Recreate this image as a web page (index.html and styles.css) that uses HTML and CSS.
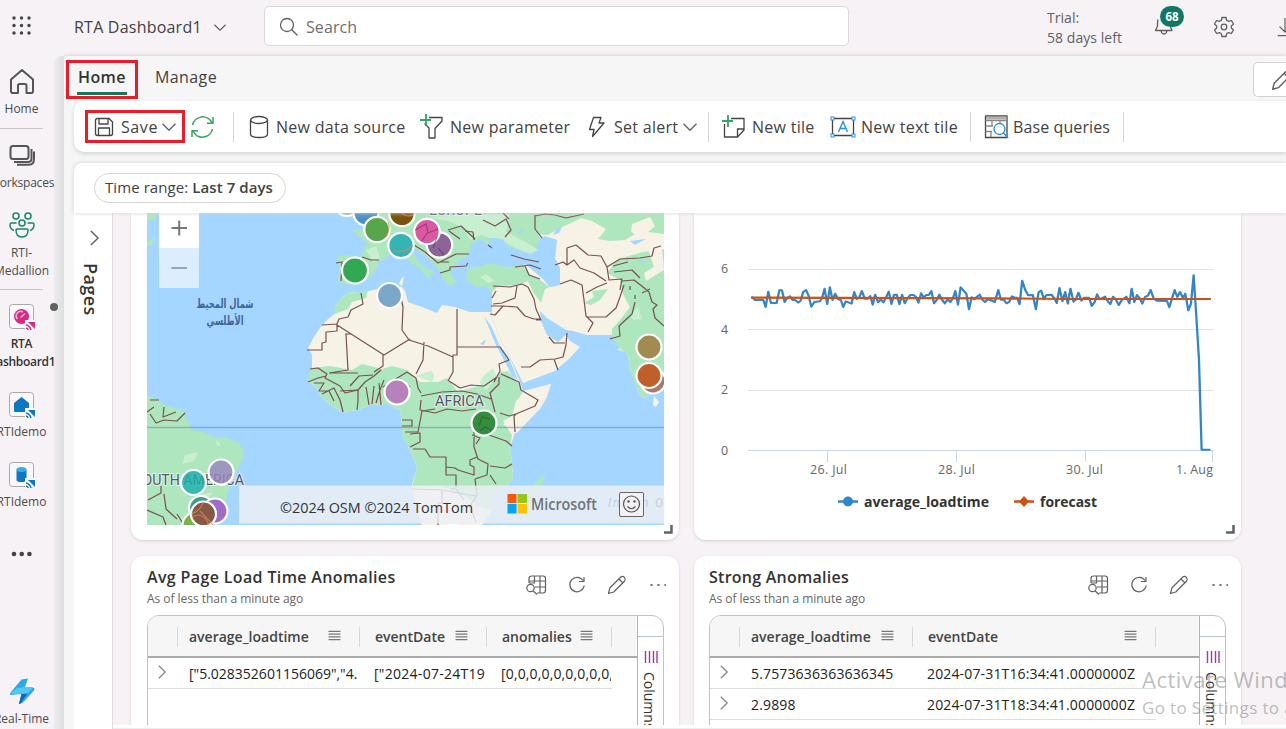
FILE: index.html
```html
<!DOCTYPE html>
<html lang="en">
<head>
<meta charset="utf-8">
<title>RTA Dashboard1</title>
<link rel="stylesheet" href="styles.css">
</head>
<body>
<svg class="defs" width="0" height="0">
  <defs>
    <symbol id="i-table" viewBox="0 0 22 22"><path d="M4 9V4.500Q4 2 6.500 2H18Q20.500 2 20.500 4.500V16Q20.500 19 18 19H12M4 7H20.500M10 13H20.500M9.500 2V9M15 2V19M4 9H10M20.500 8V13"/><circle cx="5.500" cy="14" r="3.700"/><path d="M8.200 17L12 20.500"/></symbol>
    <symbol id="i-refresh" viewBox="0 0 22 22"><path d="M17 6.500A7.200 7.200 0 1 0 18.200 11.500M18 3V7.500H13"/></symbol>
    <symbol id="i-pencil" viewBox="0 0 22 22"><path d="M2.500 19.500L3.800 14L14.800 3Q16.500 1.700 18.300 3.300Q20 5.200 18.700 7L7.700 18Z M13 5L17 9"/></symbol>
    <symbol id="i-menu" viewBox="0 0 14 12"><path d="M0.500 1.500H13.500M0.500 4.500H13.500M0.500 7.500H13.500M0.500 10.500H13.500"/></symbol>
    <symbol id="i-chev" viewBox="0 0 14 8"><path d="M0.500 0.800L7 7.200L13.500 0.800"/></symbol>
    <symbol id="i-chevr" viewBox="0 0 8 14"><path d="M0.800 0.800L7.200 7L0.800 13.200"/></symbol>
    <symbol id="i-corner" viewBox="0 0 9 9"><path d="M7.500 0V7.500H0"/></symbol>
  </defs>
</svg>
<header class="top">
  <svg class="waffle" viewBox="0 0 20 20"><g fill="#444"><circle cx="2" cy="2" r="1.700"/><circle cx="9.500" cy="2" r="1.700"/><circle cx="17" cy="2" r="1.700"/><circle cx="2" cy="9.500" r="1.700"/><circle cx="9.500" cy="9.500" r="1.700"/><circle cx="17" cy="9.500" r="1.700"/><circle cx="2" cy="17" r="1.700"/><circle cx="9.500" cy="17" r="1.700"/><circle cx="17" cy="17" r="1.700"/></g></svg>
  <span class="app-name">RTA Dashboard1</span>
  <svg class="line app-chev"><use href="#i-chev"/></svg>
  <div class="search"><svg class="line" width="20" height="20"><circle cx="8" cy="8" r="6.500"/><path d="M12.800 12.800L18.500 18.500"/></svg><span>Search</span></div>
  <div class="trial">Trial:<br>58 days left</div>
  <div class="bell"><svg class="line" width="20" height="22"><path d="M4 4.500Q3.500 6 3.500 11L1.500 15.500H18L16.500 12M7 15.500Q7.500 19 10 19Q12.500 19 13 15.500"/></svg><span class="badge">68</span></div>
  <svg class="line gear" viewBox="0 0 22 22"><circle cx="11" cy="11" r="2.800"/><path d="M9 1.500H13L13.700 4.500L15.500 5.400L18.400 4.500L20.500 8L18.300 10V12L20.500 14L18.400 17.500L15.500 16.600L13.700 17.500L13 20.500H9L8.300 17.500L6.500 16.600L3.600 17.500L1.500 14L3.700 12V10L1.500 8L3.600 4.500L6.500 5.400L8.300 4.500Z"/></svg>
  <svg class="line down" viewBox="0 0 18 22"><path d="M9 1V16M3 10.500L9 16.500L15 10.500M1 20.500H17"/></svg>
</header>
<div class="shell">
  <nav class="rail">
    <div class="rail-items">
      <div class="ri home"><svg class="bold-line" width="28" height="28"><path d="M3 24V12.500L14 3L25 12.500V24Q25 26 23.500 26H18.500V18.500Q18.500 17 17 17H11.500Q10 17 10 18.500V26H4.500Q3 26 3 24Z"/></svg><span>Home</span></div>
      <div class="ri ws"><svg class="bold-line" width="28" height="28"><rect x="2.500" y="5" width="18" height="13" rx="2.500"/><path d="M6 21H20Q23.500 21 23.500 17.500V8M9 23.700H21Q26 23.700 26 18V10.500"/></svg><span>Workspaces</span></div>
      <div class="ri med"><svg class="green-line" width="28" height="28"><circle cx="8" cy="5" r="3"/><circle cx="20" cy="5" r="3"/><circle cx="14" cy="12" r="3"/><path d="M8 19Q8 18 9 18H19Q20 18 20 19Q20 26 14 26Q8 26 8 19ZM8.500 12H3Q2 12 2 14Q2 18 6 19.500M19.500 12H25Q26 12 26 14Q26 18 22 19.500"/></svg><span>RTI-</span><span>Medallion</span></div>
      <div class="ri dash"><i class="unsaved"></i><svg width="28" height="27"><rect class="tile-box" x="1.500" y=".5" width="24" height="24" rx="3"/><circle cx="13.500" cy="12.500" r="7.500" fill="#d52b85"/><path d="M9.500 15A4.500 4.500 0 0 1 15 8M12.500 13.500L17 9.500" stroke="#f7b5d8" stroke-width="1.500" fill="none"/><path d="M17 16H28V27H17Z" fill="#faf5f9"/><path d="M20 18H27V25Z" fill="#d52b85"/><path d="M18 21Q22 22 23 26M18 24Q20 24.500 20 26" stroke="#d52b85" stroke-width="1.500" fill="none"/></svg><span>RTA</span><span>Dashboard1</span></div>
      <div class="ri demo"><svg width="28" height="27"><rect class="tile-box" x="1.500" y=".5" width="24" height="24" rx="3"/><path d="M13.500 5L21 11V19Q21 20 20 20H7Q6 20 6 19V11Z" fill="#0c78c4"/><path d="M17 16H28V27H17Z" fill="#faf5f9"/><path d="M20 18H27V25Z" fill="#0c78c4"/><path d="M18 21Q22 22 23 26M18 24Q20 24.500 20 26" stroke="#0c78c4" stroke-width="1.500" fill="none"/></svg><span>RTIdemo</span></div>
      <div class="ri demo2"><svg width="28" height="27"><rect class="tile-box" x="1.500" y=".5" width="24" height="24" rx="3"/><path d="M8.500 7.500V18Q8.500 20 13.500 20Q18.500 20 18.500 18V7.500Z" fill="#0c78c4"/><ellipse cx="13.500" cy="7.500" rx="5" ry="2.500" fill="#38aee8"/><path d="M17 16H28V27H17Z" fill="#faf5f9"/><path d="M20 18H27V25Z" fill="#0c78c4"/><path d="M18 21Q22 22 23 26M18 24Q20 24.500 20 26" stroke="#0c78c4" stroke-width="1.500" fill="none"/></svg><span>RTIdemo</span></div>
      <svg class="more" width="22" height="6"><g fill="#444"><circle cx="3" cy="3" r="2.300"/><circle cx="10.700" cy="3" r="2.300"/><circle cx="18.400" cy="3" r="2.300"/></g></svg>
      <div class="ri rt"><svg width="28" height="28"><path d="M13.500 1.500L20 .5L17 9L26 10Q27 11 26 12.500L14.500 25L11 26L13.500 16L2 17Q1.500 16 3 14Z" fill="#2ba9e4"/><path d="M17 9H25.500L20 15L7 16L2 15.500L9 10Z" fill="#53c6f2"/><path d="M13.500 16H19L12 26L11 25.500Z" fill="#0f68bb"/></svg><span>Real-Time</span></div>
    </div>
    <div class="rail-shadow"></div>
  </nav>
  <main class="main">
    <div class="tabs">
      <div class="tab active">Home<i class="mark mark-home"></i></div>
      <div class="tab manage">Manage</div>
      <div class="edit"><svg class="line"><use href="#i-pencil"/></svg></div>
    </div>
    <div class="toolbar">
      <div class="tool save"><i class="mark mark-save"></i><svg class="dark" width="20" height="20"><path d="M1.500 3.500Q1.500 1.500 3.500 1.500H15L18.500 5V16.500Q18.500 18.500 16.500 18.500H3.500Q1.500 18.500 1.500 16.500ZM5 1.500V7H14V1.500M4.500 18.500V11H15.500V18.500"/></svg><span>Save</span><svg class="line chev"><use href="#i-chev"/></svg></div>
      <svg class="sync" viewBox="0 0 24 24"><path d="M2 10A10.300 10.300 0 0 1 21.500 8M22 14A10.300 10.300 0 0 1 2.500 16M22.500 2V8.300H16.500M1.500 22V15.700H7.500"/></svg>
      <i class="sep s1"></i>
      <div class="tool ds"><svg class="dark" width="20" height="24"><ellipse cx="10" cy="5" rx="8.500" ry="3.500"/><path d="M1.500 5V19Q1.500 22.500 10 22.500Q18.500 22.500 18.500 19V5"/></svg><span>New data source</span></div>
      <div class="tool param"><svg class="dark" width="24" height="26"><path d="M9 3.500H22V7L15 14.500V24H9V14L4.500 9.500"/><path class="plus" d="M6 0V12M0 6H11"/></svg><span>New parameter</span></div>
      <div class="tool alert"><svg class="dark" width="18" height="22"><path d="M5.500 1.500H13L11 7H16L4.500 20.500L6 13.500H1.500Z"/></svg><span>Set alert</span><svg class="line chev"><use href="#i-chev"/></svg></div>
      <i class="sep s2"></i>
      <div class="tool tile"><svg class="dark" width="24" height="24"><path d="M9 3.500H22V15L15.500 22H2.500V9M22 14H15.500V22"/><path class="plus" d="M6 0V12M0 6H11"/></svg><span>New tile</span></div>
      <div class="tool ttile"><svg width="26" height="22"><path class="frame" d="M2.500 2.500H23.500V19.500H2.500Z"/><g fill="#fff" stroke="#2994d5"><rect x="1" y="1" width="3" height="3"/><rect x="22" y="1" width="3" height="3"/><rect x="1" y="18" width="3" height="3"/><rect x="22" y="18" width="3" height="3"/><path fill="none" stroke-width="1.400" d="M8.500 16L13 5.500L17.500 16M10 12.500H16"/></g></svg><span>New text tile</span></div>
      <i class="sep s3"></i>
      <div class="tool base"><svg class="dark" width="26" height="26"><path d="M1.500 2H23V23.500H1.500Z"/><path d="M2 4H22.500" stroke="#b5adad" stroke-width="3"/><path d="M1.500 6.500H23M1.500 12H9M1.500 17.500H8M8 6.500V12M16 6.500V9M7 18V23" stroke="#888"/><circle cx="15.500" cy="15" r="5.500" fill="#fff" stroke="#2994d5"/><path d="M19.500 19L24 24" stroke="#2994d5" stroke-width="1.500"/></svg><span>Base queries</span></div>
      <i class="sep s4"></i>
    </div>
    <div class="filter"><div class="pill">Time range: <b>Last 7 days</b></div></div>
    <div class="work">
      <aside class="pages"><svg class="line"><use href="#i-chevr"/></svg><span>Pages</span></aside>
      <div class="canvas">
        <div class="cards">
          <section class="card map-card">
            <svg class="map" viewBox="147 213 517 312">
              <rect x="147" y="213" width="517" height="312" fill="#a5d6ff"/>
              <g fill="#aee7bd">
                <path d="M147 213H158L155 219L147 221ZM147 243L152 239L155 237L152 246L147 246Z"/>
                <path d="M147 393L150 397L157 399L166 406L183 410L188 423L193 430L203 432L214 437L227 438L238 443L243 449L244 456L237 470L231 481L228 493L223 510L220 525H147Z"/>
                <path fill="#f6f2e6" d="M348 292L360 293L373 290L389 287L402 287L405 291L408 302L422 307L437 313L442 305L455 307L470 312L482 312L491 312L492 318L500 338L510 358L520 382L523 391L535 388L551 384L547 397L540 409L528 421L515 433L510 447L512 463L513 480L505 487L495 492L492 510L482 525H422L416 505L412 485L417 467L410 450L402 435L402 423L400 410L387 404L370 405L357 410L342 412L329 404L320 395L317 388L308 382L310 373L312 368L312 355L308 348L314 337L320 328L328 319L337 312L335 307L342 298Z"/>
                <path d="M348 292L360 293L368 290L366 298L352 302L348 309L335 314L334 308L342 298ZM310 368L330 366L352 370L362 364L382 369L392 366L407 370L420 382L438 382L447 378L458 392L478 386L493 380L500 372L508 371L518 383L523 394L516 401L512 416L503 421L512 435L510 447L512 463L513 480L505 487L495 492L492 510L478 506L462 494L440 486L412 488L417 467L410 450L402 435L402 423L400 410L387 404L370 405L357 410L342 412L329 404L320 395L317 388L308 382Z"/>
                <path fill="#f6f2e6" d="M492 286L525 264L542 278L550 287L560 285L555 260L557 240L545 236L530 240L536 213H664V375L656 390L645 398L640 395L633 377L630 370L628 355L613 335H587L573 331L566 330L547 318L540 311L541 321L547 335L558 342L566 335L570 341L580 347L570 358L555 371L523 383L518 373L500 338L492 318Z"/>
                <path d="M353 230L360 230L367 222L361 213H545L537 230L540 240L536 248L531 254L509 247L502 240L490 237L488 245L481 239L472 244L468 255L459 261L450 272L456 282L450 286L443 279L438 269L430 260L417 249L412 249L416 259L425 268L436 272L430 274L431 281L420 269L407 259L401 254L390 255L378 262L378 268L369 278L356 285L344 284L338 280L340 266L336 257L345 255L361 257L367 243Z"/>
                <path d="M467 269L480 266L490 263L507 267L523 265L528 273L540 280L550 287L545 289L541 303L533 292L528 281L518 285L498 286L492 292L485 286L477 288L466 279ZM545 213H664V234L640 231L625 240L610 241L598 239L606 229L592 221L581 218L573 222L558 229L548 235L535 234ZM584 303L594 297L592 291L608 289L600 300L591 305ZM620 280L607 273L618 259L643 252L664 249V375L656 390L645 398L640 395L633 377L630 370L628 355L618 346L612 336L612 329L620 320L630 307L623 294Z"/>
              </g>
              <g fill="#c9efd1"><path d="M430 217L467 214L510 214L506 232L526 242L538 250L530 254L510 245L499 238L490 238L481 235L470 240L463 228L451 222ZM480 277L486 274L495 281L488 283ZM630 315L638 307L642 319L633 320ZM620 347L624 352L617 350ZM366 250L376 246L380 258L374 263ZM185 455L198 452L194 461L182 464ZM217 440L221 446L216 445ZM203 494L213 492L205 503L195 510ZM416 376L438 368L432 382ZM478 380L493 368L497 377L486 391Z"/></g>
              <g fill="#f6f2e6"><path d="M438 382L447 377L460 392L468 380L478 386L486 370L480 367H430ZM522 393L551 384L543 403L530 419L517 433L512 432L513 427L503 425L514 415L517 402ZM402 278L404 276L402 287L399 283ZM654 396L659 402L656 407L653 405Z"/><path d="M412 487L425 488L462 499L476 510L489 509L482 525H422L417 510Z"/><path d="M650 217L655 226L648 232L661 236L664 270L646 281L644 273L654 267L648 249L631 231L632 224Z"/></g>
              <g fill="#a5d6ff"><path d="M537 243L547 237L557 240L550 248L554 256L560 268L560 285L550 287L542 277L541 262ZM468 255L472 244L480 239L487 245L495 244L503 239L510 252L522 259L523 265L507 267L490 262L475 267L467 264ZM553 235L557 228L562 227L559 233ZM517 233L525 228L519 235ZM484 316L491 326L500 346L508 356L518 380L512 376L505 362L496 345Z"/><path d="M484 415L493 413L493 420L486 423ZM630 241L646 239L635 245ZM640 260L648 262L639 263ZM480 344L486 339L484 345Z"/></g>
              <path fill="#aee7bd" d="M546 473L542 485L534 500L531 517L526 516L525 502L534 484Z"/>
              <g class="borders">
                <path d="M337 324L322 325M361 293L363 304L351 310L348 317L339 319L337 324L337 331L326 332L326 342L322 343L322 350L307 350M337 325L384 355L410 339M383 355L383 366L374 372M346 334L348 370L329 373M345 334H350M310 369L318 368L327 374L325 378L340 386L345 393L358 390L365 382L374 376L381 370M329 373H358M400 293L403 307L402 330L409 340M409 340L428 346L453 357M424 342L423 360L416 374M457 309V355H453V372L448 381M457 347H500L509 360L499 364L500 371L494 382M449 381L460 388L471 385L484 386L497 377"/>
                <path d="M326 376L318 378L308 382M314 383H324L319 391L329 391L334 401M322 394L334 388L340 400L343 412M340 391L358 390L358 401L357 410M350 386L359 376L373 375M366 387L369 405M374 386L372 404M379 383L381 405M384 380L380 390L376 403M383 387L407 372L416 378L418 388L421 393M400 379L410 387M402 420H412V426H402M405 432H418L422 411L435 409M410 434L420 433V442L410 447M413 449H425L430 457H446V467L455 468L458 470L474 475V467L470 465V460L477 457M421 400L420 410L435 413L447 409L462 411L476 409M421 396L442 392L462 391L477 394L491 399M499 377L499 384L490 393L495 412M501 374L519 382L521 390L538 400L535 406L516 414L514 416L515 432M500 413L509 416L516 414M474 432V447L478 459L488 464L487 475L475 479M486 434L506 441L512 446M490 466L505 468L512 464M490 475L496 484M446 467V475H456V488L450 489M412 489L443 490L458 493L476 496M442 491V503H438V525M475 479L477 495L470 506L476 522M456 489L464 500M472 435L480 438L476 444"/>
                <path d="M147 412L154 407M150 414L156 423L164 420L177 421L185 413M164 407L163 417L176 412M150 400H159M161 486V493L148 500M164 494L166 509L177 519M147 510L163 517L166 525M177 514L184 525M336 263L342 262L341 281M362 257L371 260L379 260M411 243L425 252L438 263L456 254L469 254M440 273L450 270V267L466 266L468 263M440 262H449M448 230L461 226L475 239M483 220L495 226L506 219L511 230L505 237M503 213L509 219M535 216L545 214L555 215L566 218L575 216L584 214M535 215V229L542 238"/>
                <path d="M449 231L460 239M465 231L473 232L474 240M488 245L492 248M511 255L524 259L539 262M515 267L530 265L541 269M525 266L529 275L540 279M493 286L510 287L522 284L528 287L534 299L536 309L541 320H536M517 286L515 298L502 303L493 304M492 298L496 291M491 306L503 306L495 315L490 314M503 306L517 307L525 316L534 319L541 319M521 367H530L540 360L555 359L563 357L566 345L567 333M554 359L558 370M549 337L554 343L565 343M555 265L563 262L567 265V248L576 245L588 255L601 256L607 267M567 265L574 260L580 268L594 273L606 281M560 284L571 280L582 285L584 300L586 316L593 323L588 332M571 319M586 317H606L616 308L620 297L624 285M607 267L609 280L622 279L620 290M607 267L620 259L640 258L652 256L654 248L661 246M613 266L628 262M614 272L632 270L640 278M622 281L634 280L643 287L649 292L652 302L657 305L653 309L655 318L664 326M586 293L597 287L607 283M635 302L632 314L619 326L620 336L610 339M630 286V290M635 295V299M642 293L650 289"/>
              </g>
              <path d="M147 427.500H664" stroke="#6b83c9" stroke-opacity=".55" stroke-width="1.500"/>
              <g class="map-label"><text x="429" y="215" textLength="53" lengthAdjust="spacingAndGlyphs">EUROPE</text><text x="435" y="406" textLength="49" lengthAdjust="spacingAndGlyphs">AFRICA</text><text x="134" y="485" textLength="110" lengthAdjust="spacingAndGlyphs">SOUTH AMERICA</text></g>
              <g class="arabic"><text x="225" y="308" textLength="57" lengthAdjust="spacingAndGlyphs">شمال المحيط</text><text x="225" y="325" textLength="37" lengthAdjust="spacingAndGlyphs">الأطلسي</text></g>
              <g class="pins">
                <circle cx="347" cy="204" r="12" fill="#aebd7b"/><circle cx="366" cy="213" r="12.500" fill="#4b91c8"/><circle cx="377" cy="229.500" r="12.700" fill="#58a64c"/><circle cx="402" cy="213.500" r="12.700" fill="#79530d"/><circle cx="401" cy="245.500" r="12.700" fill="#35b4b5"/><circle cx="439.500" cy="245" r="12.700" fill="#8c6498"/><circle cx="427" cy="231.500" r="12.700" fill="#dc56a2"/>
                <circle cx="355" cy="270.500" r="13" fill="#32a852"/><circle cx="389.500" cy="295.500" r="12.500" fill="#7ba7c9"/><circle cx="397" cy="392" r="12.500" fill="#b682bb"/><circle cx="484" cy="423" r="12.500" fill="#318e3c"/><circle cx="649" cy="347" r="12.500" fill="#a18b51"/><circle cx="653" cy="381" r="12.500" fill="#aa7768"/><circle cx="649" cy="375.500" r="12.500" fill="#bf602b"/>
                <circle class="glass" cx="221" cy="472" r="12.500" fill="#9785bd"/><circle class="glass" cx="193.500" cy="482.500" r="12.500" fill="#1cb0ad"/><circle cx="201" cy="508" r="12" fill="#419c89"/><circle cx="215" cy="511" r="12.500" fill="#a06cc8"/><circle cx="195" cy="525" r="12.500" fill="#79b34c"/><circle cx="203.500" cy="514" r="12.500" fill="#865846"/><circle cx="453" cy="537" r="12.500" fill="#d02b85"/>
              </g>
              <g class="pin-detail"><path d="M415 230L426 224L428 233L438 229M427 233L422 241M433 248L437 237M438 248L444 255M479 426L482 417L490 419M480 431L485 427L491 430"/><path class="rings" d="M203 503Q199 512 191 514M200 511L214 526M192 517Q203 511 209 525M394 204Q405 221 414 214M386 237Q391 229 388 222M392 250Q404 254 412 246"/></g>
              <rect x="159" y="213" width="40" height="35" fill="#fff"/><rect x="159" y="248" width="40" height="40" fill="#dcedfe"/>
              <path d="M171.500 228H187M179.200 220.500V235.500" stroke="#777" stroke-width="2"/><path d="M171.500 268H187" stroke="#8fa9bf" stroke-width="2"/>
              <rect x="239" y="485.500" width="425" height="38" fill="#ecf0f5" fill-opacity=".84"/>
              <text x="608" y="507" class="ocean" textLength="55">Indian O</text>
              <text class="copy" x="280" y="512.500" textLength="193" lengthAdjust="spacingAndGlyphs">©2024 OSM ©2024 TomTom</text>
              <path fill="#f25b0a" d="M507.500 494H516.500V503H507.500Z"/><path fill="#94c718" d="M517.500 494H527V503H517.500Z"/><path fill="#05a3f0" d="M507.500 504H516.500V513.500H507.500Z"/><path fill="#ffc20b" d="M517.500 504H527V513.500H517.500Z"/>
              <text class="msft" x="531" y="510" textLength="66" lengthAdjust="spacingAndGlyphs">Microsoft</text>
              <rect x="619.500" y="492.500" width="24" height="24" rx="1.500" fill="#f4f0f5" stroke="#666"/><g fill="none" stroke="#555" stroke-width="1.200"><circle cx="631.500" cy="504" r="8"/><path d="M627.500 506.500Q631.500 511 635.500 506.500"/></g><circle cx="628.500" cy="501.500" r="1.200" fill="#555"/><circle cx="634.500" cy="501.500" r="1.200" fill="#555"/>
            </svg>
            <svg class="corner"><use href="#i-corner"/></svg>
          </section>
          <section class="card">
            <svg class="chart" viewBox="694 213 547 327">
              <path d="M748 269.500H1214M748 329.500H1214M748 390.500H1214" stroke="#e3e3e3"/>
              <path d="M748 450.500H1214M827.500 450V462M956.500 450V462M1085.500 450V462M1212.500 450V462" fill="none" stroke="#ccd6eb"/>
              <g transform="translate(690 210) scale(.3801 .3333)" fill="none" stroke-linejoin="round" stroke-linecap="round">
                <path stroke="#2f86ca" stroke-width="6" d="M164 262L171 270H193L199 291L206 245L213 279H228L235 241H242L249 276L256 264L263 259L270 270H277L285 278L291 272L298 246L305 240L312 257L319 290L327 276L342 274L348 262L354 236L361 282L368 232L375 270L382 251L390 268L397 270L403 291L410 274L425 281L432 246L439 267L445 263L452 243L460 266H468L474 258L481 284L487 254L495 277L502 268L509 277L517 259L523 245L530 282L537 254H544L551 283L558 254L565 280L572 265L580 255H588L594 260L601 278L608 250L615 263L621 255H628L635 243L642 280L649 270L656 254L663 269L670 280L678 268L685 276L692 264L698 243L705 284L712 232L727 251L734 298L741 262L748 268L755 260L762 254L769 269L776 276L784 267L802 276L811 240L818 269H825L833 280L840 276L847 259L854 263H861L867 283L874 212L882 240L890 256L902 255L910 298L917 247L924 242L931 266L938 255L951 254L959 266L965 279L972 234L980 274L987 246L994 281L1001 236L1009 275L1015 269L1022 248L1030 272L1037 263L1050 263L1057 288L1065 275L1071 253L1078 268L1092 260L1100 275L1106 282L1113 260L1120 268L1128 285L1136 270L1148 260L1156 280L1162 236L1169 276L1176 255L1183 265L1190 281L1197 261L1205 257L1212 240L1220 266L1228 272L1255 273L1261 292L1275 240L1282 261L1289 246L1297 264L1303 251L1311 301L1318 281L1325 196L1331 300L1339 447L1346 719H1367"/>
                <path stroke="#cf5012" stroke-width="6.500" stroke-linecap="square" d="M164 263L790 265L1000 267H1367"/>
              </g>
              <g class="axis"><text x="721" y="273">6</text><text x="721" y="334">4</text><text x="721" y="394">2</text><text x="721" y="455">0</text><text x="810" y="474" textLength="37">26. Jul</text><text x="938" y="474" textLength="37">28. Jul</text><text x="1066" y="474" textLength="37">30. Jul</text><text x="1176" y="474" textLength="37">1. Aug</text></g>
              <path d="M838 501.500H858" stroke="#2f86ca" stroke-width="2.500"/><circle cx="848" cy="501.500" r="5" fill="#2f86ca"/>
              <path d="M1014 501.500H1034" stroke="#cf5012" stroke-width="2.500"/><path d="M1024 496L1029 501.500L1024 507L1019 501.500Z" fill="#cf5012"/>
              <g class="legend"><text x="864" y="506.500" textLength="125" lengthAdjust="spacingAndGlyphs">average_loadtime</text><text x="1040" y="506.500" textLength="57" lengthAdjust="spacingAndGlyphs">forecast</text></g>
            </svg>
            <svg class="corner"><use href="#i-corner"/></svg>
          </section>
          <section class="card table-card">
            <div class="card-head"><div><h2>Avg Page Load Time Anomalies</h2><p>As of less than a minute ago</p></div>
              <div class="actions"><svg><use href="#i-table"/></svg><svg><use href="#i-refresh"/></svg><svg><use href="#i-pencil"/></svg><span class="dots"></span></div></div>
            <div class="grid g1">
              <div class="rows">
                <div class="row head"><span></span><span class="c c1">average_loadtime<svg><use href="#i-menu"/></svg></span><span class="c c2">eventDate<svg><use href="#i-menu"/></svg></span><span class="c c3">anomalies<svg><use href="#i-menu"/></svg></span><span class="c"></span></div>
                <div class="row"><span class="ex"><svg class="line"><use href="#i-chevr"/></svg></span><span class="c d1">["5.028352601156069","4.</span><span class="c d2">["2024-07-24T19</span><span class="c d3">[0,0,0,0,0,0,0,0,0,0,0</span></div>
              </div>
              <div class="cols"><svg width="14" height="12"><path d="M1.500 0V12M5.500 0V12M9.500 0V12M13 0V12" stroke="#9b3d9a" stroke-width="1.400"/></svg><span>Columns</span></div>
            </div>
          </section>
          <section class="card table-card second">
            <div class="card-head"><div><h2>Strong Anomalies</h2><p>As of less than a minute ago</p></div>
              <div class="actions"><svg><use href="#i-table"/></svg><svg><use href="#i-refresh"/></svg><svg><use href="#i-pencil"/></svg><span class="dots"></span></div></div>
            <div class="grid g2">
              <div class="rows">
                <div class="row head"><span></span><span class="c c1">average_loadtime<svg><use href="#i-menu"/></svg></span><span class="c c2">eventDate<svg><use href="#i-menu"/></svg></span><span class="c"></span></div>
                <div class="row"><span class="ex"><svg class="line"><use href="#i-chevr"/></svg></span><span class="c">5.7573636363636345</span><span class="c date">2024-07-31T16:34:41.0000000Z</span></div>
                <div class="row"><span class="ex"><svg class="line"><use href="#i-chevr"/></svg></span><span class="c">2.9898</span><span class="c date">2024-07-31T18:34:41.0000000Z</span></div>
              </div>
              <div class="cols"><svg width="14" height="12"><path d="M1.500 0V12M5.500 0V12M9.500 0V12M13 0V12" stroke="#9b3d9a" stroke-width="1.400"/></svg><span>Columns</span></div>
            </div>
          </section>
        </div>
        <div class="strip"></div>
      </div>
    </div>
  </main>
</div>
<div class="watermark"><div>Activate Windows</div><p>Go to Settings to activate Windows.</p></div>
</body>
</html>
```

FILE: styles.css
```css
* { box-sizing: border-box; }
body { margin: 0; width: 1286px; height: 729px; overflow: hidden; position: relative; background: #f7f2f6; font-family: "Open Sans", "Noto Sans", sans-serif; color: #424242; font-size: 16px; }
svg { flex: none; display: block; }
.defs { position: absolute; }
.line, .dark, .bold-line, .green-line, .sync, .actions svg { fill: none; stroke: #616161; stroke-width: 1.3; stroke-linejoin: round; }
.dark { stroke: #444; }
.bold-line { stroke: #555; stroke-width: 2; }
.green-line { stroke: #188568; stroke-width: 1.5; }

.top { height: 52px; display: flex; align-items: center; overflow: hidden; white-space: nowrap; }
.top > * { flex: none; }
.waffle { width: 20px; height: 20px; margin-left: 12px; }
.app-name { margin-left: 42px; width: 127px; letter-spacing: .22px; margin-top: 1px; }
.app-chev { width: 12px; height: 7px; margin: 2px 0 0 13px; }
.search { margin-left: 38px; width: 585px; height: 40px; border: 1px solid #dcd8dc; border-radius: 5px; background: #fff; display: flex; align-items: center; padding: 2px 0 0 14px; gap: 7px; color: #707070; letter-spacing: .1px; }
.trial { margin-left: 198px; margin-top: 4px; width: 90px; font-size: 14px; line-height: 20px; color: #616161; letter-spacing: .05px; }
.bell { margin-left: 17px; position: relative; }
.badge { position: absolute; left: 6px; top: -9px; width: 24px; height: 21px; border-radius: 11px; background: #117865; color: #fff; font-size: 11.500px; font-weight: 700; line-height: 21px; text-align: center; }
.gear { width: 22px; height: 22px; margin: 1px 0 0 39px; }
.down { width: 18px; height: 20px; margin: 1px 0 0 41px; }

.shell { display: flex; height: 677px; }
.rail { width: 64px; flex: none; display: flex; overflow: hidden; }
.rail-items { width: 43px; display: flex; flex-direction: column; align-items: center; }
.rail-shadow { width: 10px; margin: 4px 0 0 11px; border-radius: 8px 0 0; background: linear-gradient(90deg, #ededef, #dededf); }
.ri { width: 43px; display: flex; flex-direction: column; align-items: center; font-size: 12px; line-height: 18px; position: relative; flex: none; white-space: nowrap; color: #4b4b4b; }
.home { height: 77px; padding-top: 15px; gap: 5px; border-bottom: 1px solid #c9c5c9; }
.ws { height: 82px; padding-top: 12px; gap: 5px; letter-spacing: -.2px; }
.med { height: 79px; border-bottom: 1px solid #c9c5c9; }
.med svg { margin-bottom: 5px; }
.dash { padding-top: 14px; height: 102px; font-weight: 600; color: #333; letter-spacing: -.3px; }
.dash svg { margin-bottom: 4px; }
.tile-box { fill: #faf8fa; stroke: #a9a9a9; }
.unsaved { position: absolute; left: 50px; top: 13px; width: 8px; height: 8px; border-radius: 50%; background: #616161; }
.demo, .demo2 { gap: 4px; height: 70px; }
.more { margin-top: 19px; flex: none; }
.rt { margin-top: 121px; gap: 4px; }

.main { flex: 1; min-width: 0; margin-top: 4px; background: #f6f6f6; box-shadow: 0 -1px 3px #d8d4d8; clip-path: inset(-4px 0 0 0); }
.tabs { height: 45px; display: flex; white-space: nowrap; }
.tab { position: relative; height: 39px; line-height: 43px; }
.active { margin-left: 13px; width: 50px; padding-left: 1px; font-weight: 600; font-size: 16px; letter-spacing: .4px; border-bottom: 3px solid #117865; color: #333; }
.mark { position: absolute; border: 3px solid #ed1c24; }
.mark-home { left: -11px; top: 4px; width: 72px; height: 39px; }
.manage { margin-left: 28px; font-size: 16px; letter-spacing: .4px; }
.edit { margin: 6px 0 0 auto; width: 33px; height: 35px; border: 1px solid #d1d1d1; border-right: 0; border-radius: 5px 0 0 5px; background: #fff; padding: 5px 0 0 16px; overflow: hidden; }
.edit svg { width: 24px; height: 24px; }
.toolbar { margin-left: 10px; height: 51px; background: #fff; border-radius: 10px 0 0 10px; box-shadow: 0 2px 4px #d3d3d3; display: flex; align-items: center; white-space: nowrap; letter-spacing: .28px; }
.tool { display: flex; align-items: center; position: relative; flex: none; }
.mark-save { left: -9px; top: -6px; width: 100px; height: 33px; }
.save { margin-left: 20px; width: 84px; gap: 7px; letter-spacing: .6px; }
.chev { width: 14px; height: 8px; margin-left: -1px; }
.sync { width: 25px; height: 24px; margin-left: 12px; stroke: #37a35e; stroke-width: 1.5; }
.plus { stroke: #37a35e; stroke-width: 1.8; }
.sep { width: 1px; height: 30px; background: #d5d5d5; flex: none; }
.s1 { margin-left: 18px; }
.ds { margin-left: 15px; width: 171px; gap: 7px; }
.param { width: 168px; gap: 6px; }
.alert { width: 110px; gap: 8px; }
.alert .chev, .save .chev { margin-left: -3px; }
.s2 { margin-left: 10px; }
.tile { margin-left: 13px; width: 108px; gap: 6px; }
.ttile { width: 128px; gap: 5px; }
.s3 { margin-left: 12px; }
.base { margin-left: 13px; width: 126px; gap: 3px; letter-spacing: .1px; }
.s4 { margin-left: 13px; }
.frame { fill: none; stroke: #444; stroke-width: 1.3; }
.filter { position: relative; z-index: 1; margin: 11px 0 0 10px; height: 50px; border-radius: 8px 0 0; background: #fff; box-shadow: 0 0 4px #d3d0d3; padding: 10px 0 0 20px; }
.pill { width: 192px; height: 30px; border: 1px solid #d5d5d5; border-radius: 15px; line-height: 26px; padding-left: 10px; font-size: 15px; white-space: nowrap; letter-spacing: .08px; }
.pill b { font-weight: 600; }
.work { display: flex; margin-left: 10px; height: 516px; }
.pages { width: 39px; flex: none; background: #fff; border-right: 1px solid #ddd; display: flex; flex-direction: column; align-items: center; padding-top: 17px; gap: 17px; }
.pages svg { width: 9px; height: 16px; margin-left: 3px; }
.pages span { writing-mode: vertical-rl; font-weight: 600; font-size: 18px; letter-spacing: .4px; line-height: 24px; margin-right: 4px; color: #333; }
.canvas { flex: 1; min-width: 0; background: #f7f2f6; }
.cards { height: 512px; overflow: hidden; display: grid; grid-template-columns: 548px 547px; grid-template-rows: 327px 185px; gap: 16px 15px; padding-left: 18px; }
.card { background: #fff; border-radius: 12px; box-shadow: 0 1px 3px #d5d0d4; position: relative; }
.card:nth-child(-n+2) { border-radius: 0 0 12px 12px; }
.map { width: 517px; height: 312px; margin-left: 16px; }
.chart { width: 547px; height: 327px; }
.corner { position: absolute; right: 6px; bottom: 6px; width: 9px; height: 9px; fill: none; stroke: #616161; stroke-width: 2.5; }
.borders { fill: none; stroke: #775052; stroke-width: 1.2; stroke-linejoin: round; }
.map-label { font: 14px Roboto, sans-serif; fill: #595264; stroke: #fff; stroke-width: 2px; stroke-opacity: .6; paint-order: stroke; }
.arabic { font: 600 12.500px "DejaVu Sans", sans-serif; fill: #3f649c; text-anchor: middle; }
.pins { stroke: #fff; stroke-width: 2.2; }
.glass { fill-opacity: .82; }
.pin-detail { fill: none; stroke: #50304b; stroke-opacity: .5; stroke-width: 1.2; }
.rings { stroke: #d98a5a; stroke-opacity: .7; }
.ocean { font: italic 12px Roboto, sans-serif; fill: #c4cfdf; }
.copy { font-size: 14px; fill: #333; }
.msft { font-size: 16px; font-weight: 600; fill: #737373; }
.axis { font-size: 12.500px; fill: #666; }
.legend { font-size: 13.500px; font-weight: 700; fill: #333; }
.card-head { display: flex; justify-content: space-between; height: 59px; padding: 10px 13px 0 16px; }
h2 { margin: 0; font-size: 16px; line-height: 22px; font-weight: 600; letter-spacing: .36px; color: #333; white-space: nowrap; }
.second h2 { letter-spacing: .25px; }
.card-head p { margin: 2px 0 0; font-size: 12px; line-height: 18px; color: #666; white-space: nowrap; letter-spacing: -.03px; }
.actions { display: flex; gap: 18.500px; padding-top: 8px; height: 32px; }
.actions svg { width: 22px; height: 22px; stroke-width: 1.2; }
.dots { margin-left: 1.500px; width: 18px; height: 22px; background: radial-gradient(circle, #777 .9px, transparent 1.500px) 0 0 / 7px 22px repeat-x; }
.grid { margin-left: 16px; width: 517px; height: 130px; border: 1px solid #bcc4c7; border-radius: 12px 12px 0 0; display: flex; overflow: hidden; }
.second .card-head { padding-left: 15px; }
.second .grid { margin-left: 15px; }
.rows { width: 489px; font-size: 14px; white-space: nowrap; }
.row { display: grid; height: 31px; align-items: center; letter-spacing: .15px; }
.g1 .row { grid-template-columns: 29px 182px 127px 125px 1fr; }
.g2 .row { grid-template-columns: 29px 173px 243px 1fr; }
.head { height: 42px; background: #f6f6f6; border-bottom: 2px solid #aaa; font-weight: 600; letter-spacing: 0; padding-top: 1px; }
.row .c { padding-left: 12px; overflow: hidden; color: #222; }
.row .d1 { letter-spacing: 0; }
.row .d2 { letter-spacing: .28px; }
.head .c1 { padding-left: 11px; }
.g1 .row .c1 ~ .c, .g1 .row .d1 ~ .c { padding-left: 15px; }
.g2 .row .c2, .g2 .row .date { padding-left: 15px; }
.head .c { display: flex; align-items: center; height: 20px; border-left: 1px solid #d8d8d8; line-height: 20px; color: #444; }
.head .c svg { width: 13px; height: 11px; fill: none; stroke: #777; stroke-width: 1.5; margin-left: auto; margin-right: 18px; margin-bottom: 2px; }
.g2 .c2 svg { margin-right: 18px; }
.row:not(.head) { background: linear-gradient(#d9dee1, #d9dee1) 0 100% / 464px 1px no-repeat; }
.g2 .row:not(.head) { background-size: 446px 1px; }
.ex svg { width: 8px; height: 14px; margin: 0 0 3px 10px; stroke: #888; }
.cols { flex: 1; border-left: 1px solid #aeb6ba; display: flex; flex-direction: column; align-items: center; padding-top: 35px; gap: 9px; position: relative; background: linear-gradient(#bcc4c7, #bcc4c7) 0 20px / 100% 1px no-repeat; }
.cols span { writing-mode: vertical-rl; font-size: 14px; line-height: 20px; color: #333; margin-right: 3px; }
.strip { height: 4px; background: #fff; border-bottom: 1px solid #eee; }
.watermark { position: absolute; left: 1142px; top: 662px; width: 144px; height: 64px; overflow: hidden; white-space: nowrap; color: rgba(125, 125, 125, .5); font-size: 22px; line-height: 34px; letter-spacing: .5px; }
.watermark p { margin: 0; font-size: 17px; line-height: 23px; letter-spacing: .35px; }
```
